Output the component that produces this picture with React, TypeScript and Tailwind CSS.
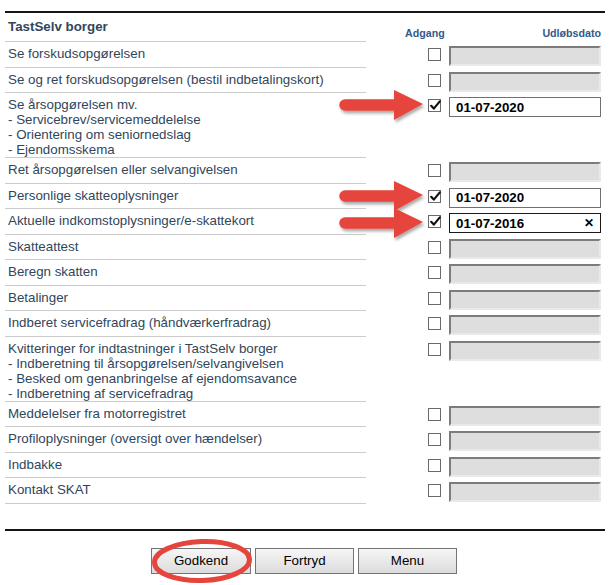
import React from "react";

type Row = {
  lines: string[];
  checked?: boolean;
  date?: string;
  focused?: boolean;
};

const rows: Row[] = [
  { lines: ["Se forskudsopgørelsen"] },
  { lines: ["Se og ret forskudsopgørelsen (bestil indbetalingskort)"] },
  {
    lines: [
      "Se årsopgørelsen mv.",
      "- Servicebrev/servicemeddelelse",
      "- Orientering om seniornedslag",
      "- Ejendomsskema",
    ],
    checked: true,
    date: "01-07-2020",
  },
  { lines: ["Ret årsopgørelsen eller selvangivelsen"] },
  { lines: ["Personlige skatteoplysninger"], checked: true, date: "01-07-2020" },
  { lines: ["Aktuelle indkomstoplysninger/e-skattekort"], checked: true, date: "01-07-2016", focused: true },
  { lines: ["Skatteattest"] },
  { lines: ["Beregn skatten"] },
  { lines: ["Betalinger"] },
  { lines: ["Indberet servicefradrag (håndværkerfradrag)"] },
  {
    lines: [
      "Kvitteringer for indtastninger i TastSelv borger",
      "- Indberetning til årsopgørelsen/selvangivelsen",
      "- Besked om genanbringelse af ejendomsavance",
      "- Indberetning af servicefradrag",
    ],
  },
  { lines: ["Meddelelser fra motorregistret"] },
  { lines: ["Profiloplysninger (oversigt over hændelser)"] },
  { lines: ["Indbakke"] },
  { lines: ["Kontakt SKAT"] },
];

function Checkbox({ checked }: { checked?: boolean }) {
  return (
    <span className="relative block h-[13px] w-[13px] border border-[#6a6a6a] bg-white">
      {checked && (
        <svg className="absolute left-[0px] top-[-1px]" width="13" height="13" viewBox="0 0 13 13">
          <path d="M2.2 6.8 L4.8 9.6 L10.8 2.4" fill="none" stroke="#111" strokeWidth="2.2" strokeLinecap="round" strokeLinejoin="round" />
        </svg>
      )}
    </span>
  );
}

function DateField({ row }: { row: Row }) {
  if (!row.date) {
    return (
      <div className="h-[20px] w-[152px] border-2 border-t-[#7c7c7c] border-l-[#7c7c7c] border-r-[#e9e9e9] border-b-[#e9e9e9] bg-[#dedede]" />
    );
  }
  return (
    <div
      className={`flex h-[20px] w-[152px] items-center justify-between border bg-white pl-[6px] pr-[6px] text-[10pt] font-bold text-black ${
        row.focused ? "border-[#1a1a1a]" : "border-[#707070]"
      }`}
    >
      <span className="leading-[15px]">{row.date}</span>
      {row.focused && <span className="text-[12px] leading-none font-bold">✕</span>}
    </div>
  );
}

function Arrow({ y }: { y: number }) {
  return (
    <g filter="url(#shadow)">
      <line x1={345} y1={y} x2={398} y2={y} stroke="#e5453c" strokeWidth={11.5} strokeLinecap="round" />
      <polygon points={`394,${y - 15} 423,${y - 1} 394,${y + 15}`} fill="#e5453c" />
    </g>
  );
}

export default function App() {
  return (
    <div
      className="relative h-[585px] w-[613px] overflow-hidden bg-white"
      style={{ fontFamily: '"Liberation Sans", Arial, sans-serif' }}
    >
      <div className="ml-[5px] w-[600px] pt-[11px]">
        <div className="h-[2px] bg-[#151515]" />

        <div className="flex h-[29px]">
          <div className="w-[361px] border-b border-[#cccccc] pl-[3px] pt-[6px] text-[10pt] leading-[15px] font-bold text-[#30465c]">
            TastSelv borger
          </div>
          <div className="ml-[39px] flex w-[40px] items-end pb-[3px] text-[8pt] leading-[12px] font-bold text-[#33598a]">
            Adgang
          </div>
          <div className="ml-[4px] flex w-[152px] items-end justify-end pb-[3px] text-[8pt] leading-[12px] font-bold text-[#33598a]">
            Udløbsdato
          </div>
        </div>

        {rows.map((row, i) => (
          <div key={i} className="flex items-start">
            <div className="min-h-[25.5px] w-[361px] border-b border-[#cccccc] pl-[3px] pt-[4px] text-[10pt] leading-[15px] text-[#30465c]">
              {row.lines.map((line) => (
                <div key={line}>{line}</div>
              ))}
            </div>
            <div className="ml-[39px] flex w-[40px] justify-end pr-[4px] pt-[6px]">
              <Checkbox checked={row.checked} />
            </div>
            <div className="ml-[4px] pt-[4px]">
              <DateField row={row} />
            </div>
          </div>
        ))}

        <div className="mt-[25px] h-[2px] bg-[#151515]" />

        <div className="mt-[17px] flex justify-center gap-[4px] pr-[2px]">
          {["Godkend", "Fortryd", "Menu"].map((label, i) => (
            <button
              key={label}
              type="button"
              className={`h-[26px] border border-[#747474] bg-linear-to-b from-[#f6f6f6] to-[#dcdcdc] text-[10pt] text-black ${
                i === 0 ? "w-[100px]" : "w-[99px]"
              }`}
            >
              {label}
            </button>
          ))}
        </div>
      </div>

      <svg className="pointer-events-none absolute inset-0" width="613" height="585" viewBox="0 0 613 585">
        <defs>
          <filter id="shadow" x="-20%" y="-40%" width="140%" height="180%">
            <feDropShadow dx="1.5" dy="2.5" stdDeviation="1.8" floodColor="#000" floodOpacity="0.35" />
          </filter>
        </defs>
        <Arrow y={105} />
        <Arrow y={196} />
        <Arrow y={223} />
        <ellipse
          cx={202}
          cy={561}
          rx={47.5}
          ry={19.5}
          fill="none"
          stroke="#e5453c"
          strokeWidth={5}
          transform="rotate(-2 202 561)"
        />
      </svg>
    </div>
  );
}
